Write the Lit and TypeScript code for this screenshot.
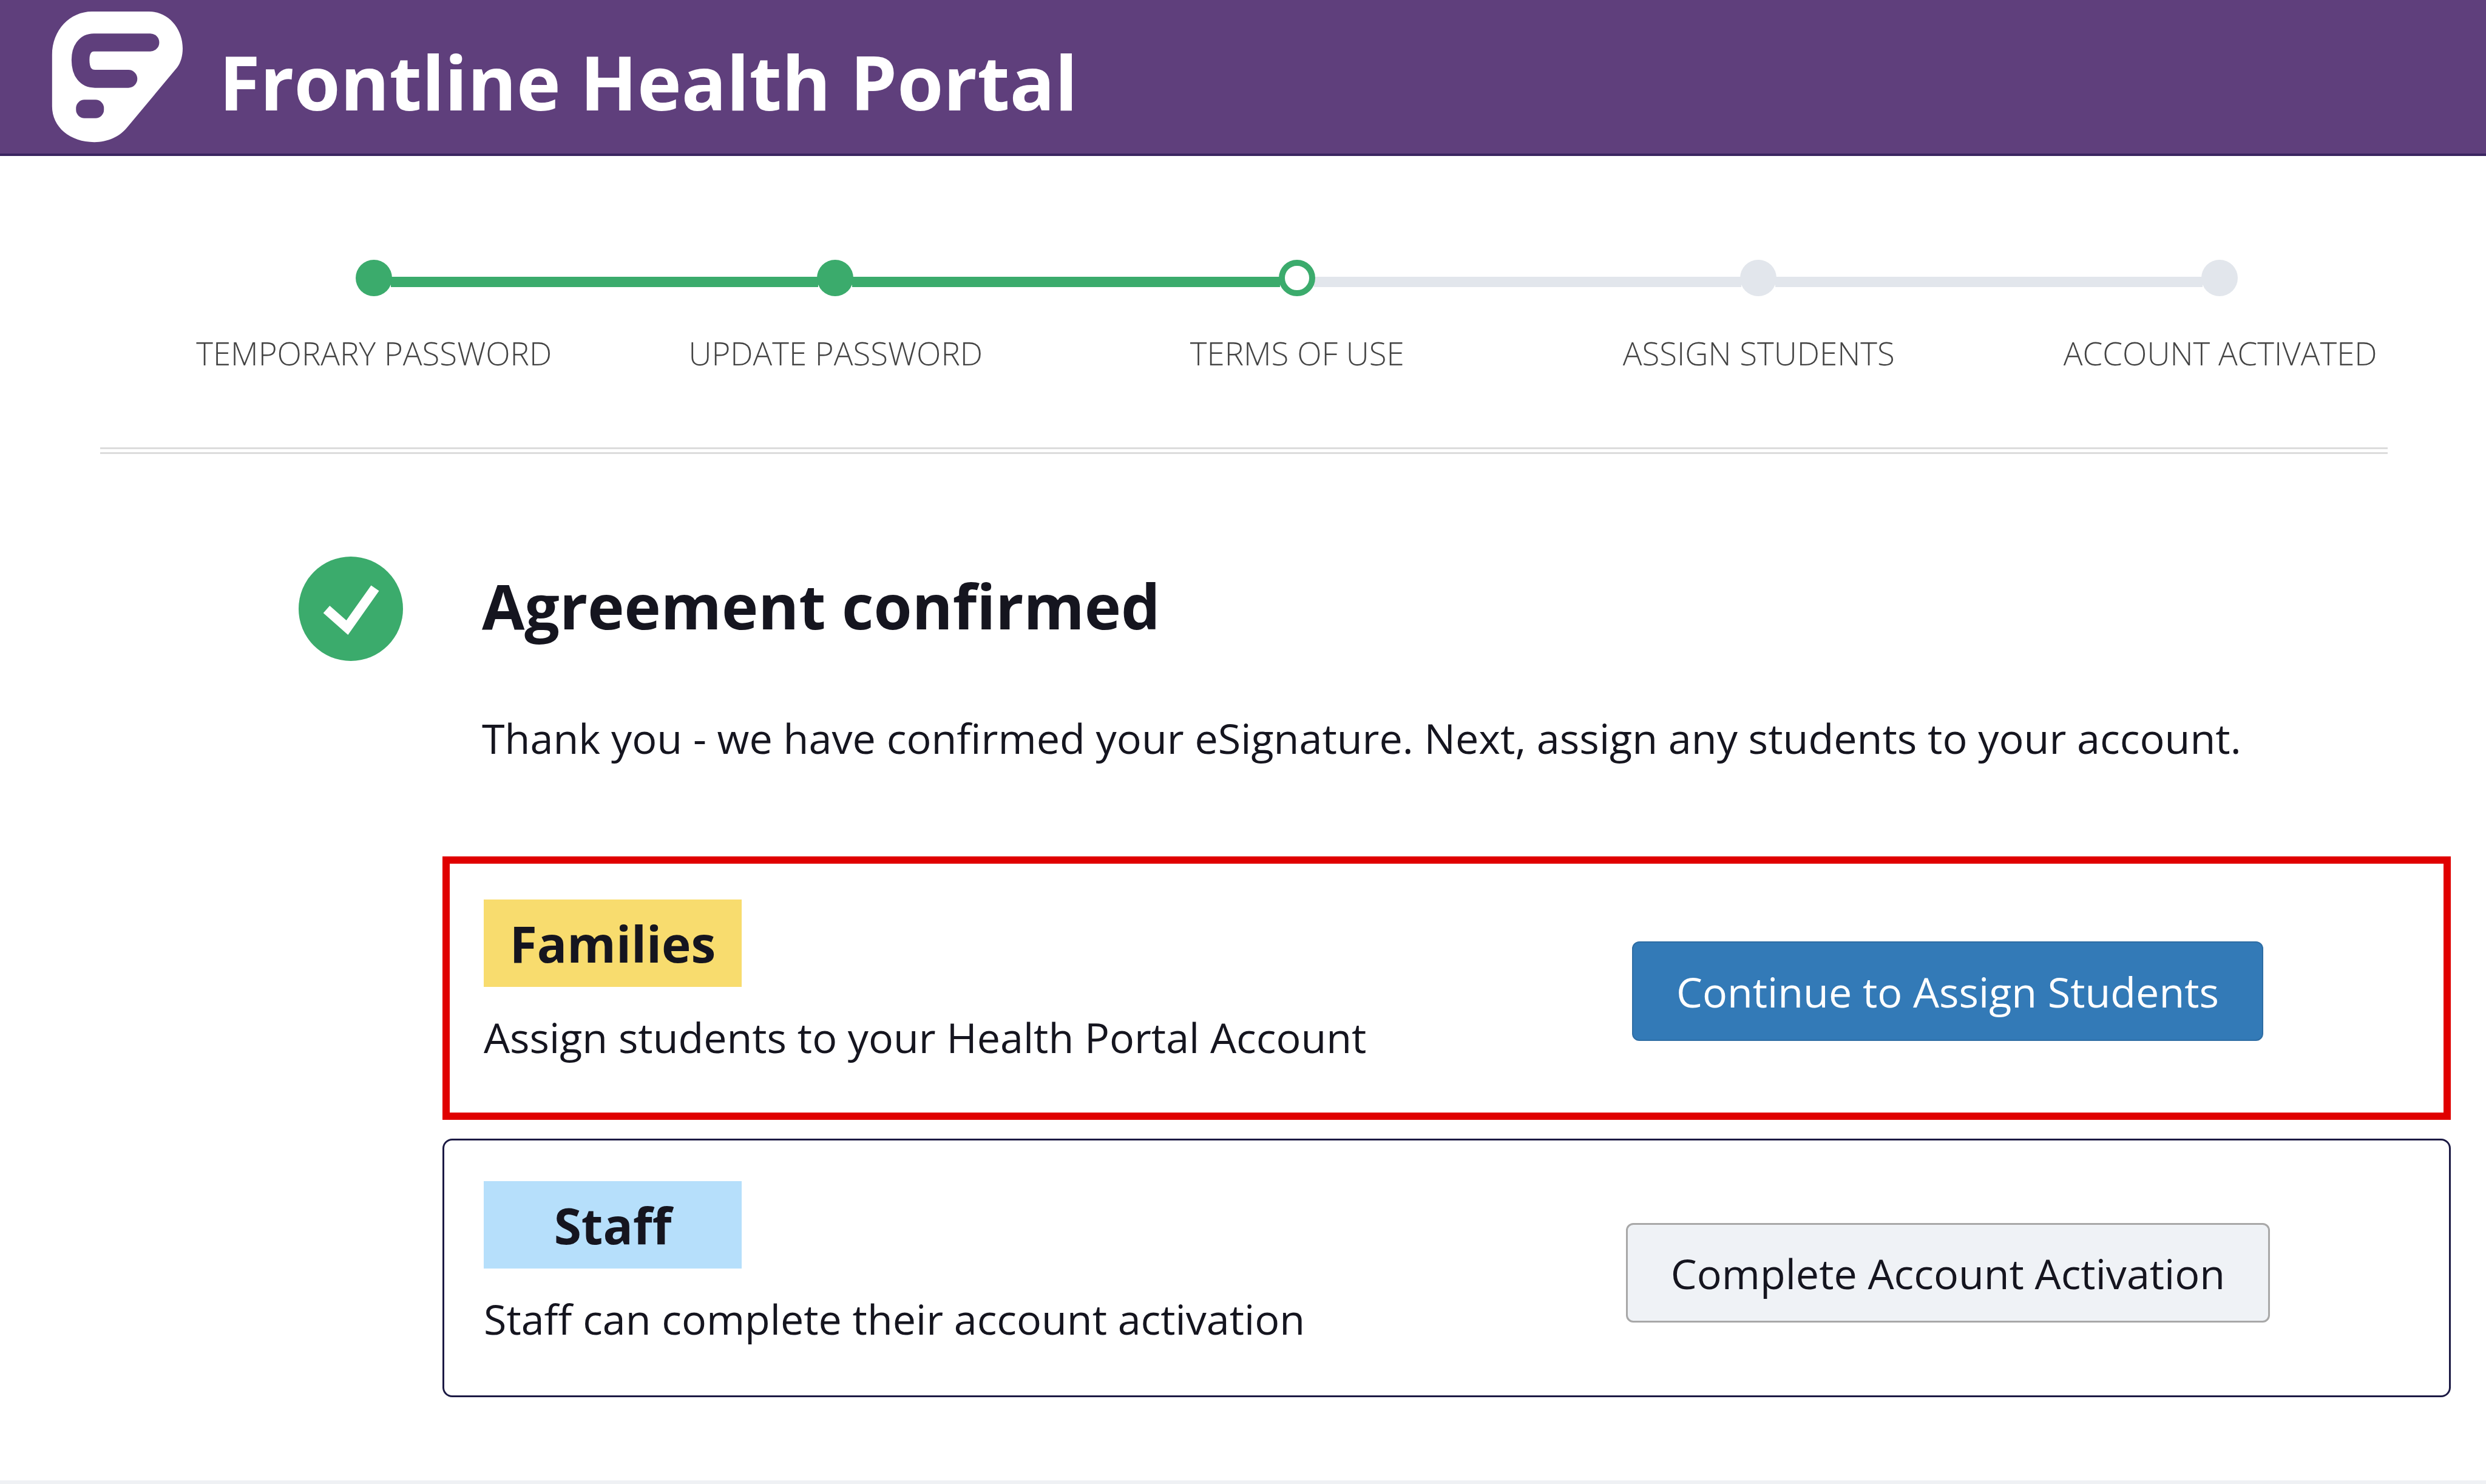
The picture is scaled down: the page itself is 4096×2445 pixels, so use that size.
import { LitElement, html, css } from "lit";
import { customElement } from "lit/decorators.js";

const steps = [
  { label: "TEMPORARY PASSWORD", state: "done" },
  { label: "UPDATE PASSWORD", state: "done" },
  { label: "TERMS OF USE", state: "current" },
  { label: "ASSIGN STUDENTS", state: "todo" },
  { label: "ACCOUNT ACTIVATED", state: "todo" },
];

@customElement("app-root")
export class AppRoot extends LitElement {
  static styles = css`
    :host { display: block; width: 4096px; height: 2445px; overflow: hidden; background: #fff; color: #15151f; font-family: "Open Sans", "Liberation Sans", sans-serif; position: relative; }
    * { box-sizing: border-box; }
    .header { height: 257px; background: #5f3f7c; border-bottom: 4px solid #3a2560; display: flex; align-items: flex-start; }
    .logo { width: 216px; height: 216px; margin: 19px 0 0 85px; flex: none; }
    .brand { margin: 0 0 0 60px; font-size: 123.1px; font-weight: 700; line-height: 268px; color: #fff; white-space: nowrap; }
    .track { display: flex; align-items: flex-start; margin: 171px 0 0 586px; width: 3101px; height: 60px; }
    .dot { width: 60px; height: 60px; border-radius: 50%; flex: none; position: relative; z-index: 1; }
    .dot.done { background: #3bab6c; }
    .dot.current { background: #fff; border: 10px solid #3bab6c; }
    .dot.todo { background: #e2e6ec; }
    .seg { flex: 1; height: 17px; margin-top: 28px; margin-left: -2px; margin-right: -2px; }
    .seg.done { background: #3bab6c; }
    .seg.todo { background: #e2e6ec; }
    .labels { display: grid; grid-template-columns: repeat(5, 760.5px); margin: 59px 0 0 236px; }
    .labels span { text-align: center; font-size: 52.8px; line-height: 70px; font-weight: 300; color: #444; white-space: nowrap; }
    .rule { height: 11px; margin: 120px 162px 0 165px; border-top: 3px solid #dcdcdc; border-bottom: 3px solid #dcdcdc; }
    .confirm { display: flex; align-items: flex-start; margin: 169px 0 0 492px; }
    .check { width: 172px; height: 172px; flex: none; }
    .heading { margin: -4px 0 0 130px; font-size: 102px; font-weight: 700; line-height: 170px; white-space: nowrap; }
    .lead { margin: 77px 0 0 794px; font-size: 68.3px; line-height: 100px; white-space: nowrap; }
    .box { display: grid; margin-left: 729px; width: 3309px; align-items: center; }
    .box.red { margin-top: 145px; height: 434px; border: 12px solid #e00000; grid-template-columns: 1fr 1634px; padding-left: 56px; }
    .box.red .copy { margin-bottom: 20px; }
    .box.red .slot { margin-top: 10px; }
    .box.plain { margin-top: 31px; height: 426px; border: 3px solid #1c1a44; border-radius: 16px; grid-template-columns: 1fr 1651px; padding-left: 65px; }
    .box.plain .copy { margin-bottom: 15px; }
    .box.plain .slot { margin-top: 16px; }
    .badge { width: 425px; height: 144px; display: flex; align-items: center; justify-content: center; font-size: 82px; font-weight: 700; }
    .badge.yellow { background: #f8dc6e; }
    .badge.blue { background: #b6dffb; }
    .sub { margin-top: 38px; font-size: 68.2px; line-height: 90px; white-space: nowrap; }
    .slot { display: flex; justify-content: center; }
    .btn { font: inherit; font-size: 68.2px; height: 164px; border-radius: 12px; display: flex; align-items: center; justify-content: center; white-space: nowrap; }
    .btn.primary { width: 1040px; background: #337ab7; color: #fff; border: 2px solid #2e6da4; }
    .btn.secondary { width: 1061px; background: #eff2f6; color: #15151f; border: 3px solid #a8a8a8; }
    .foot { position: absolute; left: 0; right: 0; bottom: 0; height: 6px; background: #eff1f4; }
  `;

  render() {
    return html`
      <div class="header">
        <svg class="logo" viewBox="103 23 263 263">
          <path fill="#fff" d="M184 23H298C338 23 366 58 366 97C366 112 362 126 355 135L255 255C240 274 215 285 189 285C140 285 104 255 104 213V110C104 60 140 23 184 23Z" />
          <path fill="none" stroke="#5f3f7c" stroke-width="36" stroke-linecap="round" d="M301 85H188C170 85 161 100 161 120C161 145 172 158 190 158H257" />
          <rect x="152" y="200" width="56" height="37" rx="17" fill="#5f3f7c" />
        </svg>
        <h1 class="brand">Frontline Health Portal</h1>
      </div>
      <div class="track">
        ${steps.map(
          (s, i) => html`
            <div class="dot ${s.state}"></div>
            ${i < steps.length - 1
              ? html`<div class="seg ${i < 2 ? "done" : "todo"}"></div>`
              : ""}
          `
        )}
      </div>
      <div class="labels">${steps.map((s) => html`<span>${s.label}</span>`)}</div>
      <div class="rule"></div>
      <div class="confirm">
        <svg class="check" viewBox="0 0 172 172">
          <circle cx="86" cy="86" r="86" fill="#3bab6c" />
          <path d="M46 87L80 117L126 52" fill="none" stroke="#fff" stroke-width="16" />
        </svg>
        <h2 class="heading">Agreement confirmed</h2>
      </div>
      <p class="lead">Thank you - we have confirmed your eSignature. Next, assign any students to your account.</p>
      <div class="box red">
        <div class="copy">
          <div class="badge yellow">Families</div>
          <div class="sub">Assign students to your Health Portal Account</div>
        </div>
        <div class="slot"><div class="btn primary">Continue to Assign Students</div></div>
      </div>
      <div class="box plain">
        <div class="copy">
          <div class="badge blue">Staff</div>
          <div class="sub">Staff can complete their account activation</div>
        </div>
        <div class="slot"><div class="btn secondary">Complete Account Activation</div></div>
      </div>
      <div class="foot"></div>
    `;
  }
}
